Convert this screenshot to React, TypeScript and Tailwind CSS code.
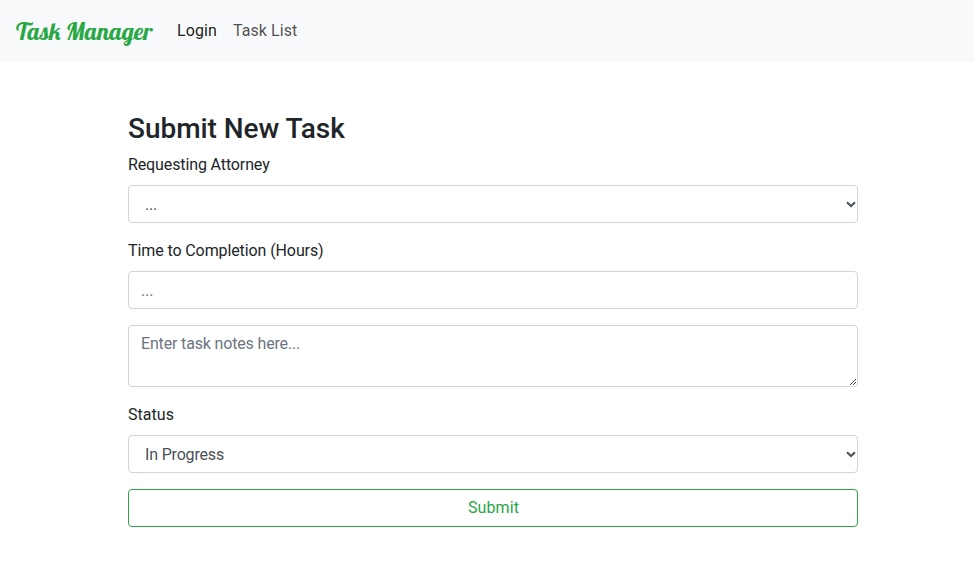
import React from "react";

const control =
  "block h-[38px] w-full rounded-[4px] border border-[#ced4da] bg-white text-base leading-6 text-[#495057] placeholder:text-[#6c757d] placeholder:opacity-100";

function Select({ value }: { value: string }) {
  return (
    <div className="relative">
      <select className={`${control} appearance-none pt-[7px] pr-6 pb-[5px] pl-4 tracking-[-0.17px]`}>
        <option>{value}</option>
      </select>
      <svg
        className="pointer-events-none absolute top-[16px] right-[2px]"
        width="10"
        height="7"
        viewBox="0 0 10 7"
        fill="none"
        stroke="#495057"
        strokeWidth="2"
      >
        <path d="M1 1.2 L5 5 L9 1.2" />
      </svg>
    </div>
  );
}

export default function App() {
  return (
    <div className="min-h-[578px] bg-white font-['Roboto',sans-serif] text-base leading-6 text-[#212529]">
      <nav className="flex h-[62px] items-center bg-[#f8f9fa] px-4">
        <a
          className="mr-6 block w-[137px] whitespace-nowrap font-['Lobster','Liberation_Serif',serif] text-[24px] leading-[38px] text-[#28a745]"
          href="#"
        >
          Task Manager
        </a>
        <a href="#" className="mr-4 tracking-[0.1px] text-black/90">Login</a>
        <a href="#" className="tracking-[0.07px] text-black/70">Task List</a>
      </nav>
      <main className="ml-32 w-[730px] pt-[50px]">
        <h3 className="mb-2 text-[28px] font-medium leading-[33px] tracking-[-0.04px]">Submit New Task</h3>
        <form>
          <div className="mb-4">
            <label className="mb-2 block tracking-[-0.12px]">Requesting Attorney</label>
            <Select value="..." />
          </div>
          <div className="mb-4">
            <label className="mb-2 block tracking-[-0.1px]">Time to Completion (Hours)</label>
            <input className={`${control} px-3 py-1.5 tracking-[-0.1px]`} placeholder="..." />
          </div>
          <div className="relative mb-4">
            <textarea
              className="block h-[62px] w-full resize-none rounded-[4px] border border-[#ced4da] bg-white px-3 py-1.5 leading-6 tracking-[-0.16px] text-[#495057] placeholder:text-[#6c757d] placeholder:opacity-100"
              placeholder="Enter task notes here..."
            />
            <svg
              className="pointer-events-none absolute right-[2px] bottom-[2px]"
              width="6"
              height="6"
              viewBox="0 0 6 6"
              fill="#495057"
              shapeRendering="crispEdges"
            >
              <path d="M0 5h1v1H0z M1 4h1v1H1z M2 3h1v1H2z M3 2h1v1H3z M4 1h1v1H4z M5 0h1v1H5z M3 5h1v1H3z M4 4h1v1H4z M5 3h1v1H5z" />
            </svg>
          </div>
          <div className="mb-4">
            <label className="mb-2 block tracking-[0.03px]">Status</label>
            <Select value="In Progress" />
          </div>
          <button
            type="button"
            className="block h-[38px] w-full rounded-[4px] border border-[#28a745] pl-px tracking-[0.1px] text-[#28a745]"
          >
            Submit
          </button>
        </form>
      </main>
    </div>
  );
}
